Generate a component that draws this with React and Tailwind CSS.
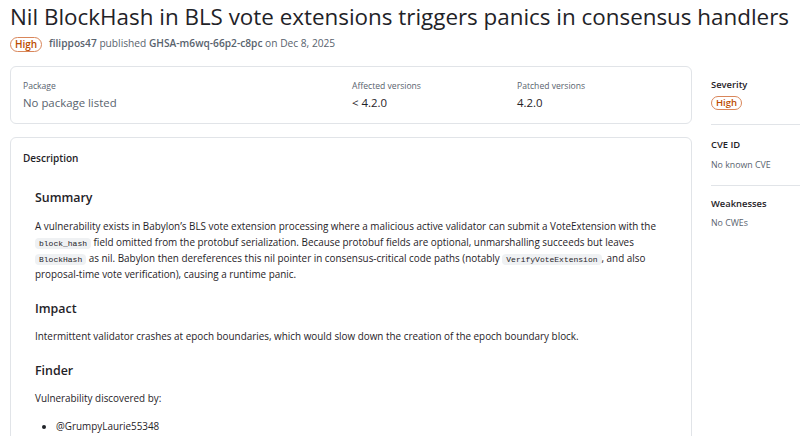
import React from "react";

const sans = { fontFamily: '"Open Sans", "Noto Sans", sans-serif' };

function Badge({ small }) {
  return (
    <span
      className={
        small
          ? "inline-flex items-center justify-center w-[31px] h-[14px] rounded-full border border-[#d9865a] text-[#bc4c00] text-[9.5px] font-semibold leading-none"
          : "inline-flex items-center justify-center w-[32px] h-[15px] rounded-full border border-[#d9865a] text-[#bc4c00] text-[10px] font-semibold leading-none"
      }
    >
      High
    </span>
  );
}

function Code({ children }) {
  return (
    <code className="font-['Liberation_Mono',monospace] text-[8px] leading-none bg-[#eff1f3] rounded-[4px] px-[4px] py-[1px] text-[#1f2328]">
      {children}
    </code>
  );
}

export default function App() {
  return (
    <div
      className="w-[800px] h-[436px] overflow-hidden bg-white text-[#1f2328] pl-[10px]"
      style={sans}
    >
      <h1 className="text-[22.4px] leading-[34px] font-normal whitespace-nowrap">
        Nil BlockHash in BLS vote extensions triggers panics in consensus handlers
      </h1>
      <div className="flex items-center gap-[7px] mt-[2px] h-[16px] text-[10.2px] text-[#59636e] whitespace-nowrap">
        <Badge />
        <span>
          <span className="font-semibold">filippos47</span> published{" "}
          <span className="font-semibold">GHSA-m6wq-66p2-c8pc</span> on Dec 8, 2025
        </span>
      </div>

      <div className="flex gap-[19px] mt-[14px]">
        <div className="w-[682px] shrink-0 flex flex-col gap-[13px]">
          <div className="border border-[#e1e4e8] rounded-[6px] h-[58px] px-[12px] pt-[11px] grid grid-cols-[329px_165px_1fr]">
            <div>
              <div className="text-[8.6px] leading-[16px] text-[#59636e]">Package</div>
              <div className="text-[11.4px] leading-[18px] text-[#59636e]">No package listed</div>
            </div>
            <div>
              <div className="text-[8.6px] leading-[16px] text-[#59636e]">Affected versions</div>
              <div className="text-[11.4px] leading-[18px] text-[#1f2328]">&lt; 4.2.0</div>
            </div>
            <div>
              <div className="text-[8.6px] leading-[16px] text-[#59636e]">Patched versions</div>
              <div className="text-[11.4px] leading-[18px] text-[#1f2328]">4.2.0</div>
            </div>
          </div>

          <div className="border border-[#e1e4e8] rounded-[6px] h-[320px]">
            <div className="px-[12px] pt-[12px] text-[10px] leading-[16px] font-semibold">Description</div>
            <div className="px-[24px] pt-[22px] text-[9.9px] leading-[16px] text-[#1f2328]">
              <h2 className="text-[12.4px] leading-[20px] font-semibold">Summary</h2>
              <p className="mt-[10px]">
                A vulnerability exists in Babylon’s BLS vote extension processing where a malicious active validator can submit a VoteExtension with the{" "}
                <Code>block_hash</Code> field omitted from the protobuf serialization. Because protobuf fields are optional, unmarshalling succeeds but leaves{" "}
                <Code>BlockHash</Code> as nil. Babylon then dereferences this nil pointer in consensus-critical code paths (notably{" "}
                <Code>VerifyVoteExtension</Code>, and also proposal-time vote verification), causing a runtime panic.
              </p>
              <h2 className="mt-[17px] text-[12.4px] leading-[20px] font-semibold">Impact</h2>
              <p className="mt-[9px]">
                Intermittent validator crashes at epoch boundaries, which would slow down the creation of the epoch boundary block.
              </p>
              <h2 className="mt-[17px] text-[12.4px] leading-[20px] font-semibold">Finder</h2>
              <p className="mt-[9px]">Vulnerability discovered by:</p>
              <ul className="mt-[12px] list-disc pl-[21px]">
                <li>@GrumpyLaurie55348</li>
              </ul>
            </div>
          </div>
        </div>

        <div className="flex-1 min-w-0">
          <div className="pt-[11px] pb-[14px] border-b border-[#e1e4e8]">
            <div className="text-[9.4px] leading-[16px] font-semibold">Severity</div>
            <div className="mt-[3px] flex"><Badge small /></div>
          </div>
          <div className="pt-[12px] pb-[12px] border-b border-[#e1e4e8]">
            <div className="text-[9.4px] leading-[16px] font-semibold">CVE ID</div>
            <div className="mt-[4px] text-[8.8px] leading-[16px] text-[#59636e]">No known CVE</div>
          </div>
          <div className="pt-[10px]">
            <div className="text-[9.4px] leading-[16px] font-semibold">Weaknesses</div>
            <div className="mt-[3px] text-[8.8px] leading-[16px] text-[#59636e]">No CWEs</div>
          </div>
        </div>
      </div>
    </div>
  );
}
